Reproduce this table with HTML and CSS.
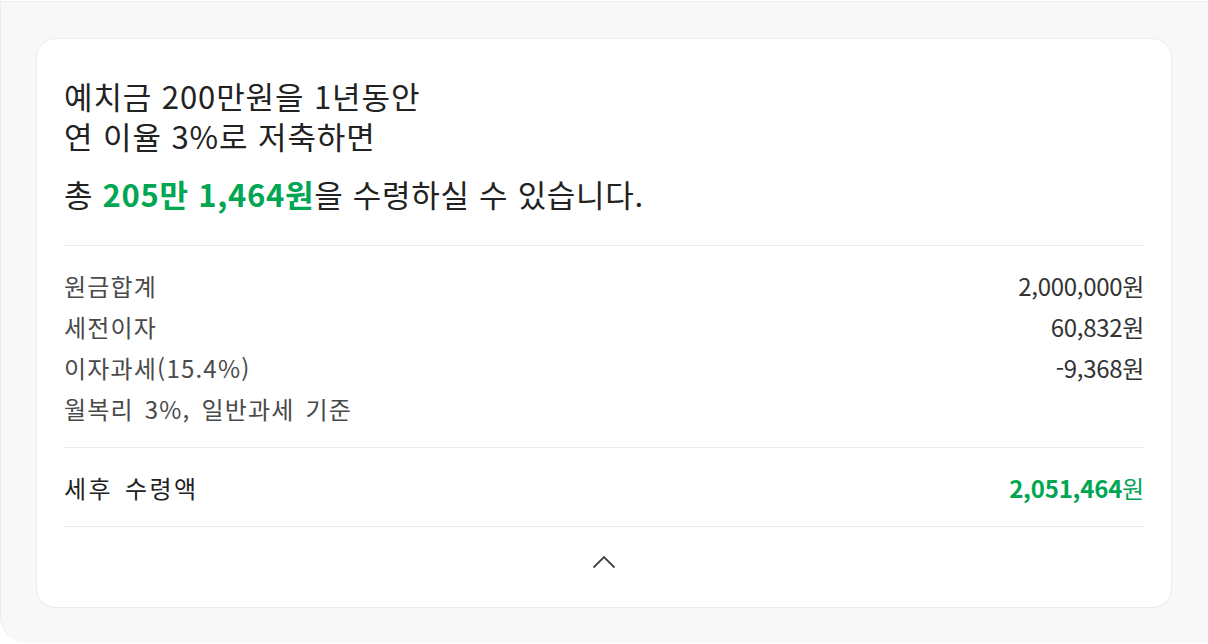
FILE: index.html
```html
<!DOCTYPE html>
<html lang="ko">
<head>
<meta charset="utf-8">
<title>예금 계산 결과</title>
<link rel="stylesheet" href="styles.css">
</head>
<body>
<div class="panel">
  <section class="card">
    <div class="head">
      <h2 class="title"><span class="line">예치금 200만원을 1년동안</span><span class="line">연 이율 3%로 저축하면</span></h2>
      <p class="result">총 <strong class="green">205만 1,464원</strong>을 수령하실 수 있습니다.</p>
    </div>
    <dl class="rows">
      <div class="row"><dt>원금합계</dt><dd>2,000,000원</dd></div>
      <div class="row"><dt>세전이자</dt><dd>60,832원</dd></div>
      <div class="row"><dt>이자과세(15.4%)</dt><dd>-9,368원</dd></div>
      <div class="row"><dt>월복리 3%, 일반과세 기준</dt><dd></dd></div>
    </dl>
    <div class="total">
      <span class="total-label">세후 수령액</span>
      <span class="total-value"><b>2,051,464</b>원</span>
    </div>
    <div class="toggle">
      <svg width="24" height="14" viewBox="0 0 24 14" aria-hidden="true"><path d="M1.5 12.5 L12 2 L22.5 12.5" fill="none" stroke="#444" stroke-width="1.8"/></svg>
    </div>
  </section>
</div>
</body>
</html>
```
FILE: styles.css
```css
html, body {
  margin: 0;
  padding: 0;
  background: #ffffff;
}
body {
  font-family: "Noto Sans CJK KR", "Noto Sans", sans-serif;
  color: #222;
}
.panel {
  margin-top: 1px;
  height: 642px;
  background: #f8f8f8;
  border: 1px solid #ececec;
  border-bottom: none;
  border-radius: 0 0 27px 27px;
  padding: 36px 36px 0 35px;
  box-sizing: border-box;
  width: 1236px;
}
.card {
  width: 1136px;
  height: 570px;
  box-sizing: border-box;
  background: #fff;
  border: 1px solid #ececec;
  border-radius: 20px;
  padding: 0 27px;
}
.head {
  padding-top: 37px;
  padding-bottom: 31px;
  border-bottom: 1px solid #ececec;
}
.title {
  margin: 0;
  font-size: 31px;
  font-weight: 400;
  line-height: 40px;
  color: #222;
  letter-spacing: 0.9px;
}
.title .line {
  display: block;
  height: 40px;
}
.result {
  margin: 18px 0 0;
  font-size: 31px;
  line-height: 40px;
  color: #222;
  letter-spacing: 0.7px;
}
.green {
  color: #00a651;
  font-weight: 700;
}
.rows {
  margin: 0;
  padding: 19px 0 18px;
  border-bottom: 1px solid #ececec;
}
.row {
  display: flex;
  justify-content: space-between;
  font-size: 24px;
  line-height: 41px;
  height: 41px;
  color: #4a4a4a;
}
.row dt, .row dd {
  margin: 0;
}
.row dt {
  letter-spacing: 1.2px;
  word-spacing: 3px;
}
.row dd {
  color: #333;
  letter-spacing: -0.3px;
}
.total {
  display: flex;
  justify-content: space-between;
  padding: 20px 0 18px;
  line-height: 40px;
  font-size: 24px;
  border-bottom: 1px solid #ececec;
}
.total-label {
  color: #222;
  letter-spacing: 2.4px;
  word-spacing: 3px;
}
.total-value {
  color: #00a651;
  letter-spacing: -0.2px;
}
.total-value b {
  font-weight: 700;
}
.toggle {
  display: flex;
  justify-content: center;
  padding-top: 28px;
}
.toggle svg {
  display: block;
}
```
